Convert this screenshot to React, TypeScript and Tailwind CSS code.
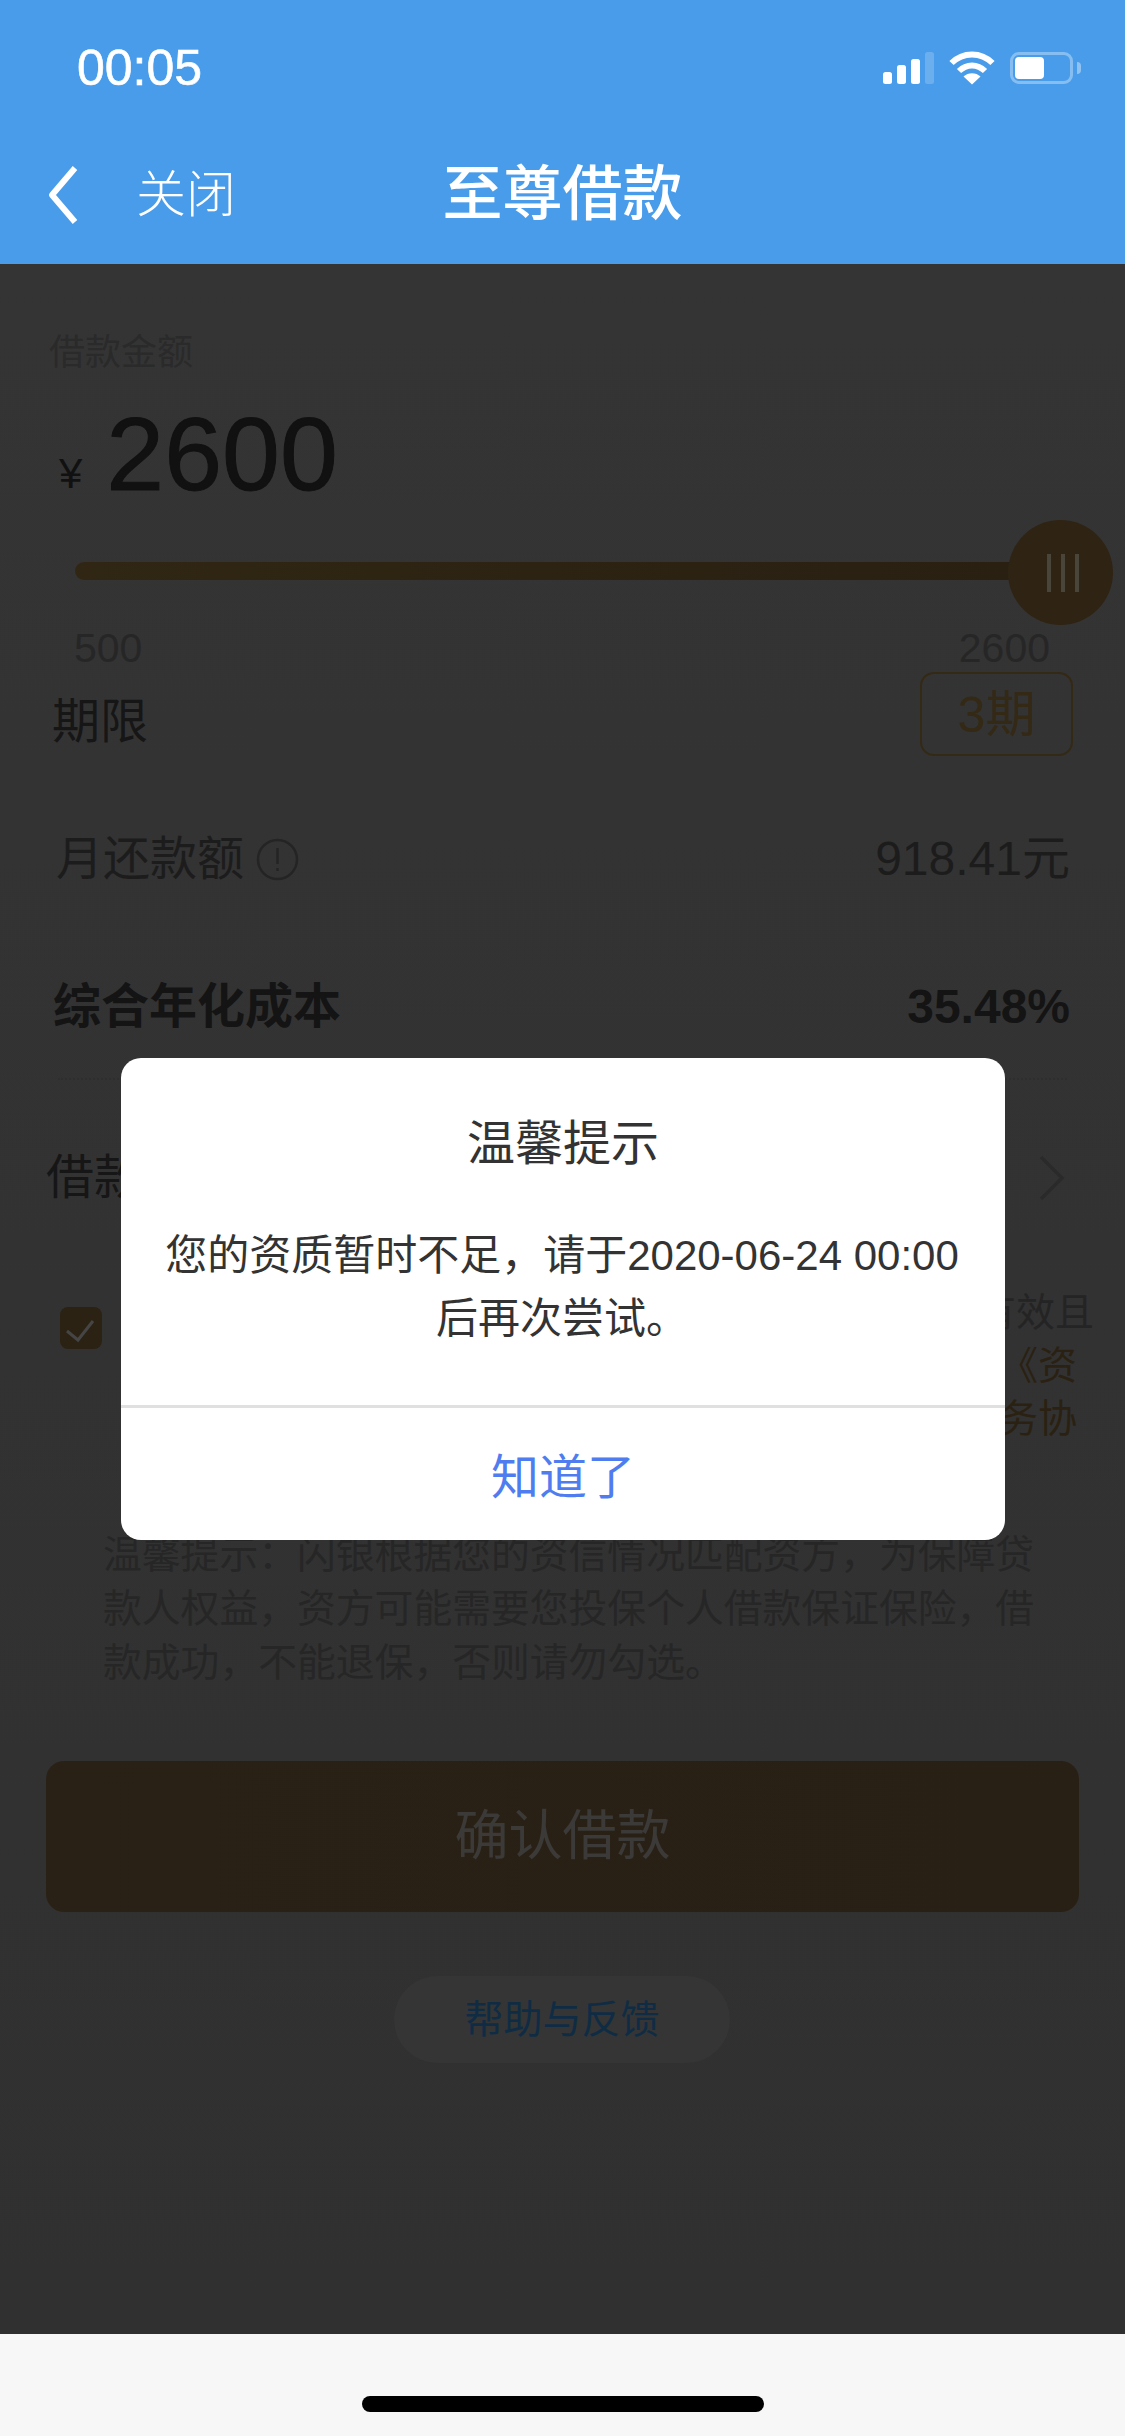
import React from 'react';

const StatusIcons = () => (
  <div className="flex items-center gap-[15px]">
    <svg width="51" height="32" viewBox="0 0 51 32" fill="white">
      <rect x="0" y="20" width="9" height="12" rx="2.5" />
      <rect x="14" y="13" width="9" height="19" rx="2.5" />
      <rect x="28" y="7" width="9" height="25" rx="2.5" />
      <rect x="42" y="0" width="9" height="32" rx="2.5" fillOpacity="0.2" />
    </svg>
    <svg width="46" height="34" viewBox="0 0 46 34" fill="none" stroke="white" strokeWidth="6">
      <path d="M2.5 12C14 0.5 32 0.5 43.5 12" />
      <path d="M10 20C17.5 12.5 28.5 12.5 36 20" />
      <path d="M23 33.5L14.5 25.5C19 21 27 21 31.5 25.5Z" fill="white" stroke="none" />
    </svg>
    <div className="flex items-center gap-[4px]">
      <div className="flex h-[32px] w-[63px] items-center rounded-[9px] border-[3px] border-white/35 px-[2px] py-[2px]">
        <div className="h-full w-[29px] rounded-[4px] bg-white" />
      </div>
      <div className="h-[12px] w-[4px] rounded-r-full bg-white/40" />
    </div>
  </div>
);

const Dialog = () => (
  <div className="absolute left-[121px] top-[794px] flex h-[482px] w-[884px] flex-col rounded-[20px] bg-white text-[#333333]">
    <div className="mt-[56px] text-center text-[48px] leading-[60px]">温馨提示</div>
    <div className="mt-[50px] h-[181px] pl-[39px] pr-[41px] text-center text-[42px] leading-[63px]">
      您的资质暂时不足，请于2020-06-24 00:00后再次尝试。
    </div>
    <div className="h-[3px] bg-[#e0e0e0]" />
    <div className="flex flex-1 items-center justify-center pt-[8px] text-[48px] text-[#4f7df0]">知道了</div>
  </div>
);

export default function App() {
  return (
    <div className="flex h-[2436px] w-[1125px] flex-col overflow-hidden font-['Liberation_Sans','Noto_Sans_CJK_SC',sans-serif]">
      <header className="h-[264px] shrink-0 bg-[#489cea] text-white">
        <div className="flex h-[132px] items-center justify-between pl-[77px] pr-[44px] pt-[4px]">
          <span className="text-[50px] [-webkit-text-stroke:0.6px_white]">00:05</span>
          <StatusIcons />
        </div>
        <div className="relative flex h-[126px] items-center pl-[48px]">
          <svg width="30" height="60" viewBox="0 0 30 60" fill="none" stroke="white" strokeWidth="6" strokeLinejoin="round">
            <path d="M27 3L4 30L27 57" />
          </svg>
          <span className="ml-[58px] text-[50px] font-light">关闭</span>
          <span className="absolute inset-x-0 text-center text-[60px] font-medium">至尊借款</span>
        </div>
      </header>

      <main className="relative flex flex-1 flex-col bg-gradient-to-b from-[#343434] to-[#303030]">
        <div className="ml-[49px] mt-[65px] h-[48px] text-[36px] leading-[48px] text-[#2a2a2a]">借款金额</div>
        <div className="mt-[15px] flex h-[120px] items-center pl-[59px] text-[#111111]">
          <span className="mt-[43px] text-[42px]">¥</span>
          <span className="ml-[24px] mt-[3px] text-[104px] leading-[120px] [-webkit-text-stroke:1px_#111111]">2600</span>
        </div>

        <div className="ml-[75px] mr-[12px] mt-[8px] flex h-[105px] items-center">
          <div className="-mr-[4px] mt-[-3px] h-[18px] flex-1 rounded-l-full bg-gradient-to-r from-[#302613] to-[#2a2012]" />
          <div className="relative flex h-[105px] w-[105px] items-center justify-center gap-[10px] rounded-full bg-[#2f2413] pl-[4px]">
            <span className="h-[38px] w-[4px] bg-[#4a453a]" />
            <span className="h-[38px] w-[4px] bg-[#4a453a]" />
            <span className="h-[38px] w-[4px] bg-[#4a453a]" />
          </div>
        </div>

        <div className="ml-[74px] mr-[75px] flex h-[48px] items-center justify-between text-[41px] text-[#262626]">
          <span>500</span>
          <span>2600</span>
        </div>
        <div className="-mt-px ml-[52px] mr-[52px] flex h-[84px] items-center justify-between">
          <span className="mt-[15px] text-[48px] text-[#161616]">期限</span>
          <div className="flex h-[84px] w-[153px] items-center justify-center rounded-[14px] border-2 border-[#342915] pt-[2px] text-[50px] text-[#342915]">
            3期
          </div>
        </div>

        <div className="ml-[56px] mr-[55px] mt-[73px] flex h-[60px] items-center justify-between text-[#1c1c1c]">
          <div className="flex items-center gap-[12px] text-[47px]">
            <span>月还款额</span>
            <svg width="43" height="43" viewBox="0 0 43 43" fill="none" stroke="#242424" strokeWidth="2.5">
              <circle cx="21.5" cy="21.5" r="19.5" />
              <path d="M21.5 10V26M21.5 30V33" />
            </svg>
          </div>
          <span className="text-[48px]">918.41元</span>
        </div>
        <div className="ml-[53px] mr-[55px] mt-[88px] flex h-[60px] items-center justify-between text-[48px] font-bold text-[#141414]">
          <span>综合年化成本</span>
          <span>35.48%</span>
        </div>
        <div className="ml-[58px] mr-[58px] mt-[41px] border-t-2 border-dotted border-[#2e2e2e]" />

        <div className="ml-[46px] mr-[60px] mt-[68px] flex h-[60px] items-center justify-between text-[48px] text-[#161616]">
          <span>借款</span>
          <svg width="26" height="46" viewBox="0 0 26 46" fill="none" stroke="#2a2a2a" strokeWidth="3.5">
            <path d="M2 2L23 23L2 44" />
          </svg>
        </div>

        <div className="ml-[60px] mr-[31px] mt-[78px] flex h-[159px] justify-between">
          <div className="mt-[21px] flex h-[42px] w-[42px] items-center justify-center rounded-[8px] bg-[#2b2213]">
            <svg width="42" height="42" viewBox="0 0 42 42" fill="none" stroke="#454545" strokeWidth="3">
              <path d="M7 24L18 33L33 14" />
            </svg>
          </div>
          <div className="flex flex-col text-right text-[39px] leading-[53px]">
            <span className="text-[#242424]">有效且</span>
            <span className="pr-[17px] text-[#2a2112]">《资</span>
            <span className="pr-[17px] text-[#2a2112]">务协</span>
          </div>
        </div>

        <p className="ml-[103px] mr-[82px] mt-[83px] text-[38.8px] leading-[54px] text-[#262626]">
          温馨提示：闪银根据您的资信情况匹配资方，为保障贷款人权益，资方可能需要您投保个人借款保证保险，借款成功，不能退保，否则请勿勾选。
        </p>

        <div className="ml-[46px] mr-[46px] mt-[71px] flex h-[151px] items-center justify-center rounded-[18px] bg-gradient-to-r from-[#2a2116] to-[#282015] text-[54px] text-[#3b3a38]">
          确认借款
        </div>
        <div className="ml-[394px] mt-[64px] flex h-[87px] w-[336px] items-center justify-center rounded-full bg-[#353535] pt-[2px] text-[39px] text-[#0f2c44]">
          帮助与反馈
        </div>

        <Dialog />
      </main>

      <footer className="flex h-[102px] shrink-0 justify-center bg-[#f7f7f7] pt-[62px]">
        <div className="h-[16px] w-[402px] rounded-full bg-black" />
      </footer>
    </div>
  );
}
